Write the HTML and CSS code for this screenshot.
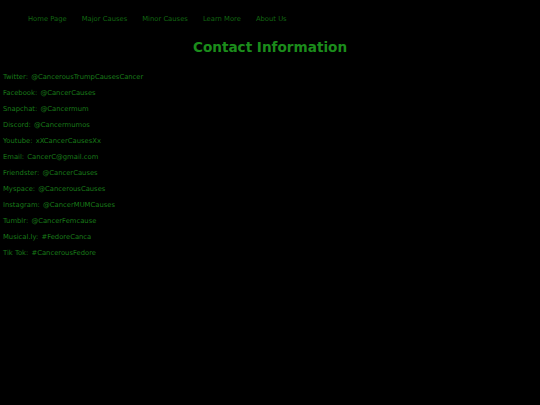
FILE: index.html
```html
<!DOCTYPE html>
<html>
<head>
<meta charset="utf-8">
<link rel="stylesheet" href="styles.css">
</head>
<body>
<nav class="nav">
  <a class="nav-link">Home Page</a>
  <a class="nav-link">Major Causes</a>
  <a class="nav-link">Minor Causes</a>
  <a class="nav-link">Learn More</a>
  <a class="nav-link">About Us</a>
</nav>
<h1 class="title">Contact Information</h1>
<ul class="contacts">
  <li><span class="label">Twitter:</span> <span>@CancerousTrumpCausesCancer</span></li>
  <li><span class="label">Facebook:</span> <span>@CancerCauses</span></li>
  <li><span class="label">Snapchat:</span> <span>@Cancermum</span></li>
  <li><span class="label">Discord:</span> <span>@Cancermumos</span></li>
  <li><span class="label">Youtube:</span> <span>xXCancerCausesXx</span></li>
  <li><span class="label">Email:</span> <span>CancerC@gmail.com</span></li>
  <li><span class="label">Friendster:</span> <span>@CancerCauses</span></li>
  <li><span class="label">Myspace:</span> <span>@CancerousCauses</span></li>
  <li><span class="label">Instagram:</span> <span>@CancerMUMCauses</span></li>
  <li><span class="label">Tumblr:</span> <span>@CancerFemcause</span></li>
  <li><span class="label">Musical.ly:</span> <span>#FedoreCanca</span></li>
  <li><span class="label">Tik Tok:</span> <span>#CancerousFedore</span></li>
</ul>
</body>
</html>
```

FILE: styles.css
```css
html, body {
  margin: 0;
  padding: 0;
  background: #000;
  height: 100%;
}
body {
  font-family: "DejaVu Sans", Verdana, sans-serif;
}
.nav {
  display: flex;
  gap: 15px;
  padding: 14px 0 0 28px;
  line-height: 10px;
  font-size: 6.8px;
}
.nav-link {
  color: #116611;
  text-decoration: none;
}
.title {
  margin: 15px 0 0 0;
  text-align: center;
  font-size: 13.6px;
  line-height: 16px;
  font-weight: bold;
  color: #1b8c1b;
}
.contacts {
  list-style: none;
  margin: 14px 0 0 0;
  padding: 0 0 0 3px;
  display: flex;
  flex-direction: column;
  font-size: 6.8px;
  line-height: 16px;
  color: #187a18;
}
.label {
  margin-right: 1px;
}
```
